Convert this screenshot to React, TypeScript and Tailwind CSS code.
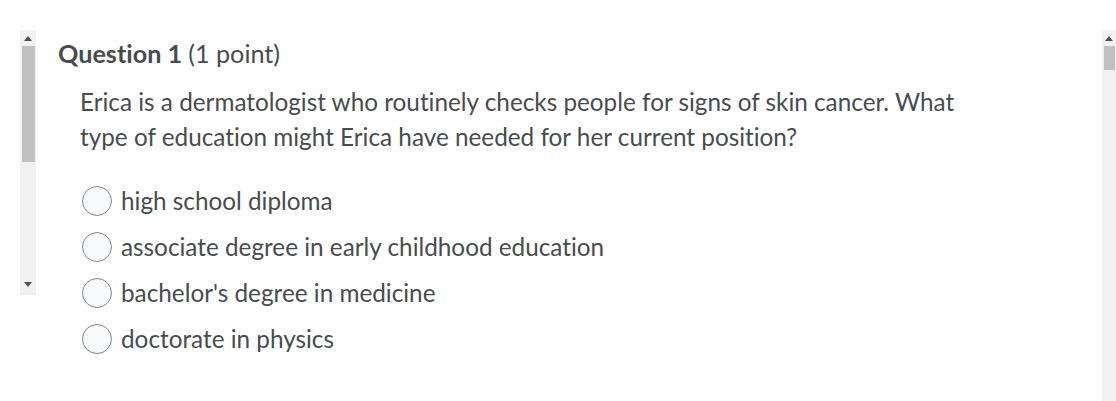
import React from "react";

const options = [
  "high school diploma",
  "associate degree in early childhood education",
  "bachelor's degree in medicine",
  "doctorate in physics",
];

function Arrow({ up }: { up?: boolean }) {
  return (
    <svg width="8" height="5" viewBox="0 0 8 5" className="mx-auto">
      <path d={up ? "M0 5 L4 0 L8 5 Z" : "M0 0 L4 5 L8 0 Z"} fill="#505050" />
    </svg>
  );
}

export default function App() {
  return (
    <div
      className="w-[1116px] h-[401px] bg-white flex overflow-hidden text-[#494c4e] [font-variant-ligatures:none]"
      style={{ fontFamily: "Lato, 'Open Sans', sans-serif" }}
    >
      {/* left inner scrollbar */}
      <div className="w-[58px] shrink-0 pt-[30px] pl-[20px]">
        <div className="w-[16px] h-[265px] bg-[#f1f1f1] flex flex-col items-center pt-[6px]">
          <Arrow up />
          <div className="w-[13px] h-[116px] bg-[#c1c1c1] mt-[5px]" />
          <div className="flex-1" />
          <div className="pb-[8px]">
            <Arrow />
          </div>
        </div>
      </div>

      {/* question */}
      <div className="flex-1 pt-[38px]">
        <h2 className="text-[25.2px] leading-[30px] font-bold">
          Question 1 <span className="font-normal">(1 point)</span>
        </h2>
        <p className="ml-[22px] mt-[16px] text-[24.3px] leading-[35px] w-[900px]">
          Erica is a dermatologist who routinely checks people for signs of skin cancer. What
          type of education might Erica have needed for her current position?
        </p>
        <div className="ml-[24px] mt-[32px] flex flex-col gap-[16px]">
          {options.map((o) => (
            <label key={o} className="flex items-center gap-[9px] h-[30px]">
              <span className="w-[30px] h-[30px] rounded-full border border-[#868686] bg-[#f9fafc] shrink-0" />
              <span className="text-[24.3px] leading-[30px]">{o}</span>
            </label>
          ))}
        </div>
      </div>

      {/* right page scrollbar */}
      <div className="w-[14px] shrink-0 mt-[30px] bg-[#f1f1f1] flex flex-col items-center pt-[6px]">
        <Arrow up />
        <div className="w-[11px] h-[24px] bg-[#c1c1c1] mt-[5px]" />
      </div>
    </div>
  );
}
